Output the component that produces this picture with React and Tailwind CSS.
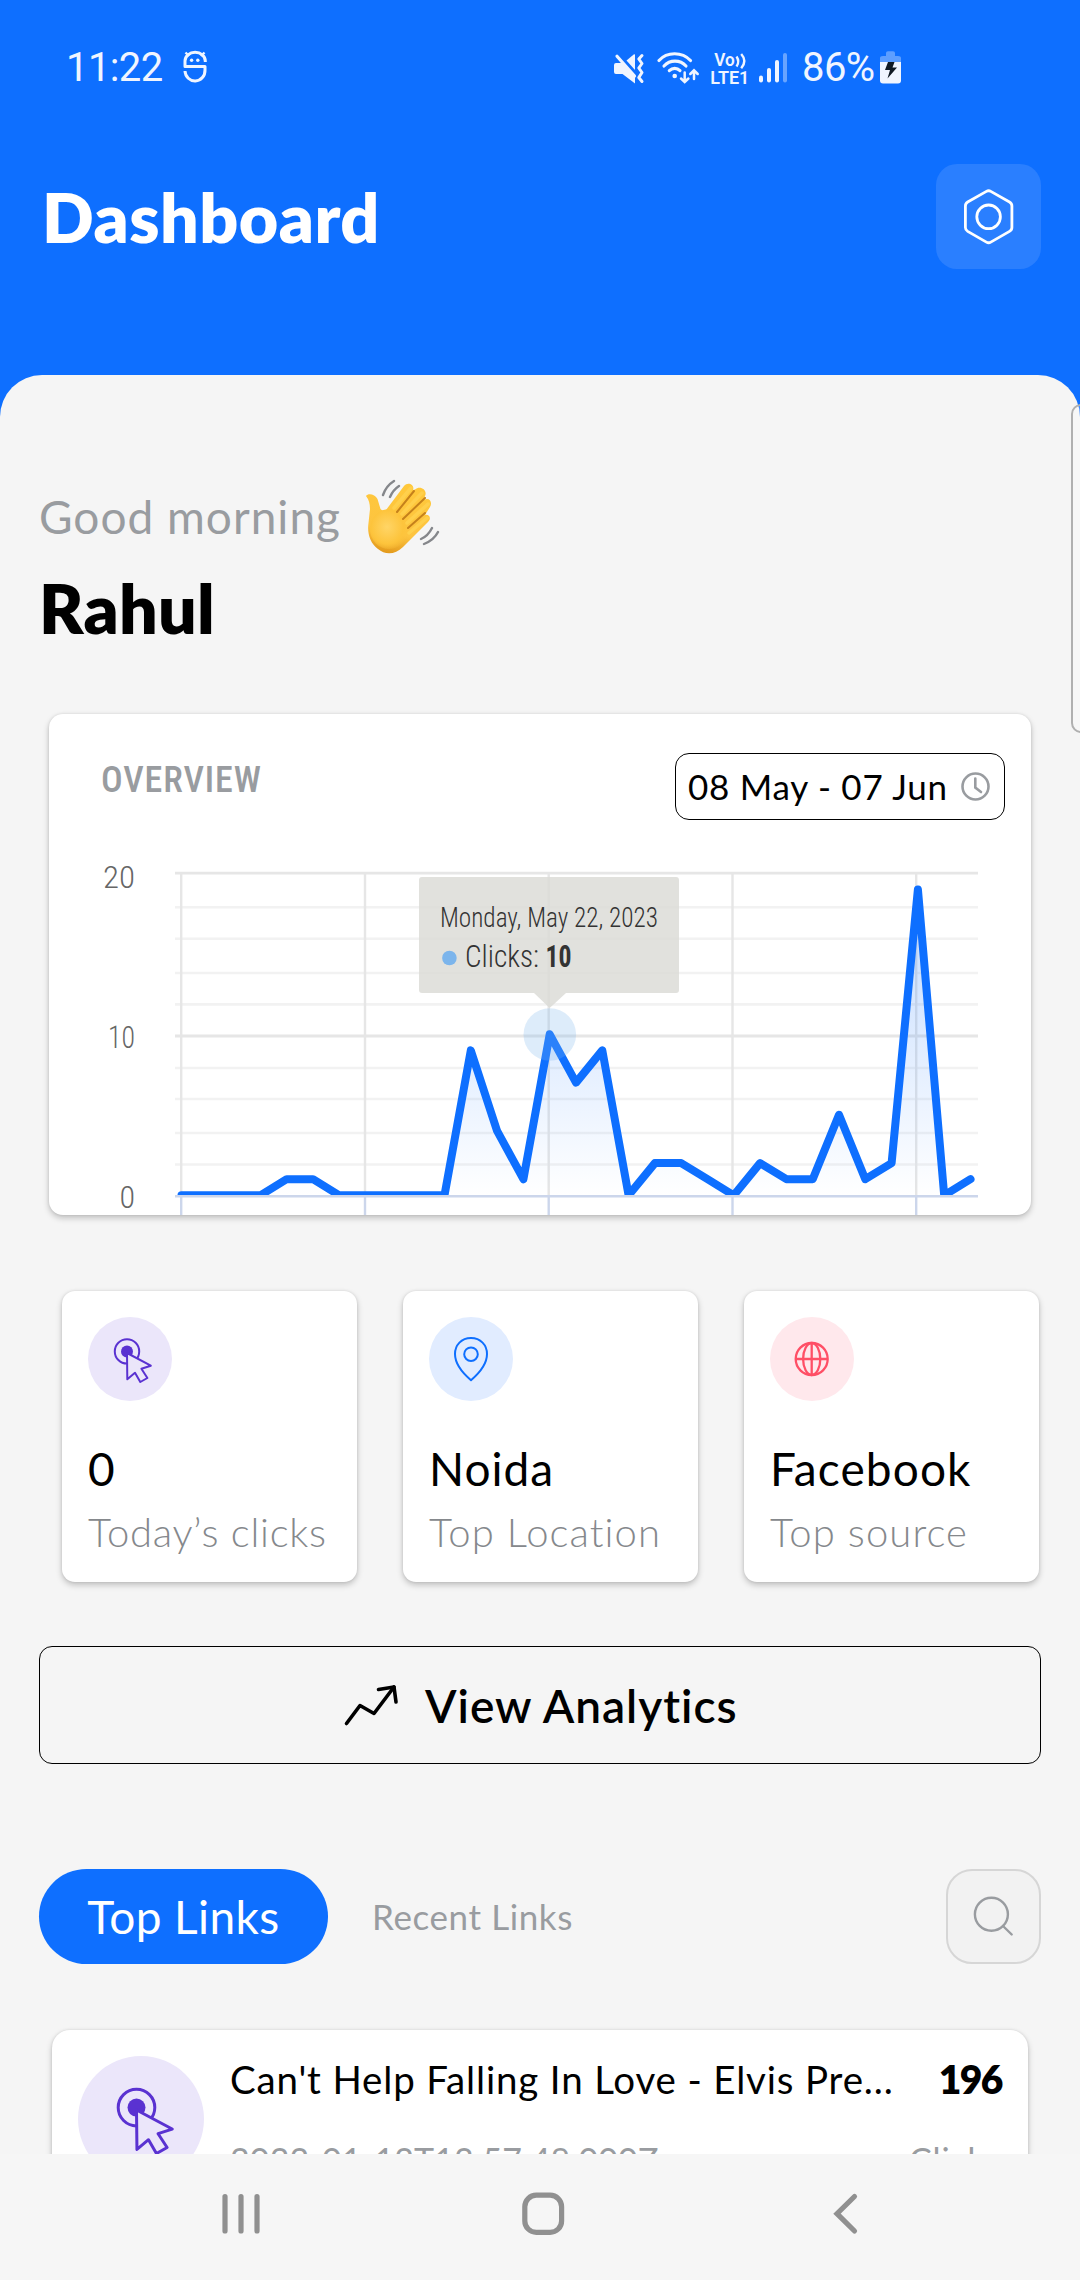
import React from "react";

const CLICKS = [0, 0, 0, 0, 1, 1, 0, 0, 0, 0, 0, 9, 4, 1, 10, 7, 9, 0, 2, 2, 1, 0, 2, 1, 1, 5, 1, 2, 19, 0, 1];
const MINOR_ROWS = [907.3, 938.7, 973, 1004.4, 1068, 1099, 1133, 1164.5];
const COLUMNS = [181.2, 365, 548.7, 732.5, 916.2];

const SHADOW = "shadow-[0_3px_6px_rgba(0,0,0,0.22),0_0_3px_rgba(0,0,0,0.1)]";

function StatusBar() {
  return (
    <div className="flex h-[134px] shrink-0 items-center pl-[66px] font-['Roboto',sans-serif] text-[40px] leading-[48px] text-[#f0f5ff]">
      <span className="w-[115px] whitespace-nowrap pt-[2px] tracking-[-0.6px]">11:22</span>
      <svg className="h-10 w-7" viewBox="0 -2 28 40" fill="none" stroke="currentColor" strokeWidth="3">
        <path d="M24.3 13V12A10 8.6 0 0 0 4 12V17.6H24V21A10 10.5 0 0 1 4 22" strokeLinejoin="round" />
        <path d="M4.5 3.5 8 7M23.5 3.5 20 7" strokeWidth="2.4" />
        <circle cx="10.6" cy="11.3" r="1.7" fill="currentColor" stroke="none" />
        <circle cx="16.8" cy="11.3" r="1.7" fill="currentColor" stroke="none" />
      </svg>
      <svg className="ml-[404px] h-10 w-[33px]" viewBox="613 47 33 40" fill="currentColor">
        <path d="M616 63H622L635 75V83.5L622.5 74H616Q614 74 614 72V65Q614 63 616 63Z" />
        <path d="M626.5 60.5 634 54.3Q635 54 635 55V70Z" />
        <path d="M617 56.3 634.5 76" stroke="currentColor" strokeWidth="3.2" strokeLinecap="round" />
        <path d="M642 55.5 638.8 59 642 63.5 638.8 68 642 72.5 638.8 77.5 642 81.5" fill="none" stroke="currentColor" strokeWidth="3" strokeLinecap="round" strokeLinejoin="round" />
      </svg>
      <svg className="ml-[11px] h-10 w-[43px]" viewBox="657 47 43 40" fill="none" stroke="currentColor" strokeWidth="3.1" strokeLinecap="round">
        <path d="M659 60.5C667 51.5 682 51.5 690.5 60.5" />
        <path d="M664 66C670 59.5 680 59.5 686 66" />
        <path d="M669.3 70.7C672.5 67.6 677 67.6 680 70.7" />
        <circle cx="674.7" cy="76" r="2.3" fill="currentColor" stroke="none" />
        <path d="M684.7 72.5V81.5M681 78.5 684.7 82 688.4 78.5M694 79V70.5M690.3 74 694 70.3 697.7 74" strokeWidth="2.5" />
      </svg>
      <svg className="ml-[10px] h-10 w-10" viewBox="710 47 40 40" fill="currentColor">
        <g fontFamily="Roboto, sans-serif" fontWeight="600">
          <text x="714.3" y="66" fontSize="17.5" textLength="20.5" lengthAdjust="spacingAndGlyphs">Vo</text>
          <text x="710.3" y="84" fontSize="18" textLength="39" lengthAdjust="spacingAndGlyphs">LTE1</text>
        </g>
        <path d="M736.5 56.5Q740 61.5 736.5 66.5M741.2 54Q747.5 61 741.2 68.3" fill="none" stroke="currentColor" strokeWidth="2.4" />
      </svg>
      <svg className="ml-[7px] h-10 w-8" viewBox="757 47 32 40" fill="currentColor">
        <rect x="759" y="75.5" width="4" height="7" rx="2" />
        <rect x="767" y="68" width="4" height="14.5" rx="2" />
        <rect x="775" y="60" width="4" height="22.5" rx="2" />
        <rect x="783" y="53" width="4" height="29.5" rx="2" opacity="0.4" />
      </svg>
      <span className="ml-[13px] w-[75px] whitespace-nowrap pt-[2px] tracking-[-0.6px]">86%</span>
      <svg className="ml-0.5 h-10 w-[23px]" viewBox="879 47 23 40" fill="currentColor">
        <path d="M880 62V58Q880 56 883 56H886V53Q886 51.3 888 51.3H893Q895 51.3 895 53V56H898Q901 56 901 58V62Z" opacity="0.35" />
        <path d="M880 62H901V80.5Q901 83.5 898 83.5H883Q880 83.5 880 80.5Z" />
        <path d="M888 62 885 70H890L887.5 78.5 897 67.5H892.5L894.5 62Z" fill="#101a24" />
      </svg>
    </div>
  );
}

function Header() {
  return (
    <header className="flex h-[241px] shrink-0 items-start justify-between pl-[42px] pr-[39px] pt-[30px]">
      <h1 className="pt-px text-[68px] font-extrabold leading-[103px] tracking-[0.5px] text-white">Dashboard</h1>
      <button className="flex size-[105px] items-center justify-center rounded-[21px] bg-[#2a7fff]">
        <svg className="h-14 w-[50px]" viewBox="0 0 50 56" fill="none" stroke="white" strokeWidth="2.8">
          <path d="M22.4 2.4Q24.6 1.1 26.8 2.4L45.5 13Q47.9 14.4 47.9 17V38.5Q47.9 41 45.5 42.4L26.8 53.1Q24.6 54.4 22.4 53.1L3.7 42.4Q1.4 41 1.4 38.5V17Q1.4 14.4 3.7 13Z" />
          <circle cx="24.6" cy="27.8" r="11.8" />
        </svg>
      </button>
    </header>
  );
}

function WavingHand() {
  return (
    <svg className="h-[76px] w-[76px]" viewBox="0 0 76 76" fill="none" strokeLinecap="round">
      <defs>
        <linearGradient id="skin" x1="0.6" y1="0" x2="0.35" y2="1">
          <stop offset="0" stopColor="#ffc83a" />
          <stop offset="0.7" stopColor="#fdc440" />
          <stop offset="1" stopColor="#e39a1c" />
        </linearGradient>
        <radialGradient id="palm" cx="0.45" cy="0.45" r="0.6">
          <stop offset="0" stopColor="#ffd566" />
          <stop offset="0.7" stopColor="#fdc43c" />
          <stop offset="1" stopColor="#fdc43c" stopOpacity="0" />
        </radialGradient>
      </defs>
      <path d="M1 17C3 14 10 15 12.5 20L15.500 30Q18 33 21 31L39 7C43 2 50 6 48 11L50 10.500C55 6 63 11 60 17L59 21C64 18 68 23 65 28L60 36C64 35 67 39 63 43L38 68C30 76 20 76 13 70C5 64 2 54 3.500 44L5 30Q5 22 1 17Z" fill="url(#skin)" />
      <ellipse cx="24" cy="50" rx="19" ry="20" fill="url(#palm)" />
      <path d="M49 12 32 33M60 19 38 40M60 34 43 49" stroke="#c5811b" strokeWidth="2" />
      <path d="M46 9 29 29M57 14 37 35M63 25 42 44M62 39 44 54" stroke="#ffd04c" strokeWidth="3.500" />
      <g stroke="#85878b" strokeWidth="2.400">
        <path d="M18 16Q21 7 29 2M25 18Q28 11 34 7M56 60Q63 57 67 49M59 65Q69 61 73 53" />
      </g>
    </svg>
  );
}

function Chart() {
  const unit = 16.1;
  const points = CLICKS.map((v, i) => [181.5 + i * 26.3, 1195.3 - v * unit]);
  const line = points.map((p) => p.join(",")).join(" ");
  return (
    <svg className="mt-[15px] block h-[380px] w-[982px]" viewBox="49 835 982 380" fontFamily="'Roboto Condensed', 'Liberation Sans Narrow', sans-serif">
      <defs>
        <linearGradient id="area" gradientUnits="userSpaceOnUse" x1="0" y1="889" x2="0" y2="1196">
          <stop offset="0" stopColor="#0e6fff" stopOpacity="0.26" />
          <stop offset="1" stopColor="#0e6fff" stopOpacity="0" />
        </linearGradient>
        <clipPath id="plot">
          <rect x="175" y="860" width="806" height="335" />
        </clipPath>
      </defs>
      {MINOR_ROWS.map((y) => (
        <path key={y} d={`M175 ${y}H978`} stroke="#f2f2f2" strokeWidth="2.6" />
      ))}
      <path d="M175 873.2H978M175 1036H978" stroke="#e6e6e6" strokeWidth="2.8" />
      {COLUMNS.map((x) => (
        <g key={x} strokeWidth="2.4">
          <path d={`M${x} 873V1196`} stroke="#e6e6e6" />
          <path d={`M${x} 1196V1215`} stroke="#ccd6eb" />
        </g>
      ))}
      <g clipPath="url(#plot)">
        <polygon points={`181.5,1196.3 ${line} 970.5,1196.3`} fill="url(#area)" />
        <polyline points={line} fill="none" stroke="#0e6fff" strokeWidth="8" strokeLinejoin="round" strokeLinecap="round" />
      </g>
      <path d="M175 1196.3H978" stroke="#ccd6eb" strokeWidth="2.6" />
      <circle cx="549.8" cy="1034.5" r="26.3" fill="#7cb5ec" opacity="0.26" />
      <path d="M422 877H676Q679 877 679 880V990Q679 993 676 993H566L549.7 1008 534 993H422Q419 993 419 990V880Q419 877 422 877Z" fill="#dbdbd6" fillOpacity="0.82" />
      <g fill="#333333">
        <text x="440" y="927" fontSize="27.5" fontWeight="300" textLength="218" lengthAdjust="spacingAndGlyphs">Monday, May 22, 2023</text>
        <text x="465" y="966.5" fontSize="31" fontWeight="300" textLength="74" lengthAdjust="spacingAndGlyphs">Clicks:</text>
        <text x="545.5" y="966.5" fontSize="31" fontWeight="700" textLength="26" lengthAdjust="spacingAndGlyphs">10</text>
      </g>
      <circle cx="449.4" cy="958" r="7.3" fill="#7cb5ec" />
      <g fill="#666666" fontSize="32" fontWeight="300" textAnchor="end">
        <text x="135" y="888" textLength="32" lengthAdjust="spacingAndGlyphs">20</text>
        <text x="135" y="1048" textLength="27" lengthAdjust="spacingAndGlyphs">10</text>
        <text x="135" y="1207.5">0</text>
      </g>
    </svg>
  );
}

function Overview() {
  return (
    <section className={`ml-[49px] mt-[67px] h-[501px] w-[982px] shrink-0 overflow-hidden rounded-[14px] bg-white pt-[39px] ${SHADOW}`}>
      <div className="flex items-start justify-between pl-[52px] pr-[26px]">
        <h2 className="font-['Roboto_Condensed','Liberation_Sans_Narrow',sans-serif] text-[36px] font-medium leading-[55px] tracking-[0.9px] text-[#999ca0]">OVERVIEW</h2>
        <div className="flex h-[67px] w-[330px] items-center justify-between rounded-[14px] border border-black pl-3 pr-[14px]">
          <span className="whitespace-nowrap text-[35px] leading-[65px] tracking-[0.75px] text-black">08 May - 07 Jun</span>
          <svg className="size-[29px]" viewBox="0 0 29 29" fill="none" stroke="#999ca0" strokeWidth="2.6" strokeLinecap="round">
            <circle cx="14.5" cy="14.5" r="13" />
            <path d="M14.3 6.5V15.5L20 20" />
          </svg>
        </div>
      </div>
      <Chart />
    </section>
  );
}

function ClickIcon({ className }) {
  return (
    <svg className={className} viewBox="0 0 84 84" fill="none" stroke="#5a32d1" strokeWidth="2" strokeLinejoin="round">
      <circle cx="39" cy="34.4" r="12.2" />
      <circle cx="39" cy="34.4" r="6" fill="#5a32d1" stroke="none" />
      <path d="M39 36 62.8 48.7 53.4 51.8 59.4 61 52.3 65 47 55.8 39.3 62.3Z" fill="#ebe6fa" />
    </svg>
  );
}

function PinIcon({ className }) {
  return (
    <svg className={className} viewBox="0 0 84 84" fill="none" stroke="#0e6fff" strokeWidth="2" strokeLinejoin="round">
      <path d="M42 21C32.5 21 26 28 26 37C26 47 33 55.5 42 63.2C51 55.5 58 47 58 37C58 28 51.5 21 42 21Z" />
      <circle cx="42" cy="37.2" r="6.8" />
    </svg>
  );
}

function GlobeIcon({ className }) {
  return (
    <svg className={className} viewBox="0 0 84 84" fill="none" stroke="#ff4f66" strokeWidth="2.3">
      <circle cx="41.7" cy="42" r="16" />
      <ellipse cx="41.7" cy="42" rx="8.6" ry="16" />
      <path d="M41.7 26V58M25.7 42H57.7" />
    </svg>
  );
}

function StatCard({ Icon, tint, value, label, valueClass, labelClass }) {
  return (
    <div className={`h-[291px] w-[295px] rounded-[13px] bg-white pl-[26px] pt-[26px] ${SHADOW}`}>
      <div className={`size-[84px] rounded-full ${tint}`}>
        <Icon className="size-full" />
      </div>
      <div className={`mt-[38px] whitespace-nowrap text-[46px] leading-[60px] text-black ${valueClass}`}>{value}</div>
      <div className={`mt-[8px] whitespace-nowrap text-[40px] font-light leading-[50px] text-[#85888c] ${labelClass}`}>{label}</div>
    </div>
  );
}

function Tabs() {
  return (
    <div className="mt-[105px] flex shrink-0 items-center pl-[39px] pr-[39px]">
      <button className="h-[95px] w-[289px] rounded-full bg-[#0e6fff] text-[46px] leading-[93px] tracking-[0.4px] text-white">Top Links</button>
      <span className="ml-[44px] pb-px text-[35px] leading-[94px] tracking-[0.6px] text-[#999ca0]">Recent Links</span>
      <button className="ml-auto size-[95px] rounded-[26px] border-[2.5px] border-[#d6d6d6] bg-[#f2f2f2]">
        <svg className="size-full" viewBox="0 0 91 91" fill="none" stroke="#999ca0" strokeWidth="2.4" strokeLinecap="round">
          <circle cx="43.4" cy="43.3" r="16.5" />
          <path d="M55 55 63.7 63.5" />
        </svg>
      </button>
    </div>
  );
}

function LinkCard() {
  return (
    <div className={`ml-[52px] mt-[66px] flex h-[240px] w-[976px] shrink-0 items-start rounded-[18px] bg-white pl-[26px] pr-[26px] pt-[26px] ${SHADOW}`}>
      <div className="size-[126px] shrink-0 rounded-full bg-[#ebe6fa]">
        <ClickIcon className="size-full" />
      </div>
      <div className="ml-[26px] flex-1">
        <div className="flex justify-between leading-[46px] text-black">
          <span className="whitespace-nowrap text-[38.5px] tracking-[0.83px]">Can't Help Falling In Love - Elvis Pre...</span>
          <span className="text-[39px] font-extrabold tracking-[-1.5px]">196</span>
        </div>
        <div className="mt-[35px] flex justify-between text-[34px] leading-[46px] text-[#999ca0]">
          <span className="tracking-[0.1px]">2022-01-12T13:57:48.000Z</span>
          <span className="pr-px tracking-[0.8px]">Clicks</span>
        </div>
      </div>
    </div>
  );
}

function NavBar() {
  return (
    <nav className="flex h-[126px] shrink-0 items-center gap-[258px] bg-[#f6f6f6] pb-[6px] pl-[219px] pt-0">
      <svg className="h-11 w-11" viewBox="0 0 44 44" stroke="#909090" strokeWidth="5.2" strokeLinecap="round">
        <path d="M6 4.5V39M22 4.5V39M38 4.5V39" />
      </svg>
      <svg className="h-11 w-11" viewBox="0 0 44 44" fill="none" stroke="#909090" strokeWidth="5.2">
        <rect x="3.8" y="3.2" width="36.8" height="37.2" rx="11.5" />
      </svg>
      <svg className="h-11 w-11" viewBox="0 0 44 44" fill="none" stroke="#909090" strokeWidth="5.2" strokeLinecap="round" strokeLinejoin="miter">
        <path d="M31.5 4.5 14 21.7 31.5 39" />
      </svg>
    </nav>
  );
}

export default function App() {
  return (
    <div className="relative flex h-[2280px] w-[1080px] flex-col overflow-hidden bg-[#0e6fff] font-['Lato',sans-serif] [font-variant-ligatures:none]">
      <StatusBar />
      <Header />
      <main className="flex h-[1779px] shrink-0 flex-col overflow-hidden rounded-t-[42px] bg-[#f5f5f5] pt-[104px]">
        <div className="flex h-[75px] shrink-0 items-center pl-[39px]">
          <span className="w-[326px] whitespace-nowrap text-[46px] leading-[73px] tracking-[1px] text-[#999ca0]">Good morning</span>
          <WavingHand />
        </div>
        <div className="mt-[13px] h-20 pl-[39px] text-[68px] font-extrabold leading-[82px] tracking-[0.3px] text-black">Rahul</div>
        <Overview />
        <div className="ml-[62px] mt-[76px] flex shrink-0 gap-[46px]">
          <StatCard Icon={ClickIcon} tint="bg-[#ebe6fa]" value="0" label="Today’s clicks" valueClass="tracking-[1px]" labelClass="tracking-[0.75px]" />
          <StatCard Icon={PinIcon} tint="bg-[#e1ecff]" value="Noida" label="Top Location" valueClass="tracking-[1px]" labelClass="tracking-[1.1px]" />
          <StatCard Icon={GlobeIcon} tint="bg-[#ffe8ec]" value="Facebook" label="Top source" valueClass="tracking-[1.1px]" labelClass="tracking-[1.1px]" />
        </div>
        <button className="ml-[39px] mt-[64px] flex h-[118px] w-[1002px] shrink-0 items-center rounded-[13px] border border-black pl-[302px] text-black">
          <svg className="h-12 w-16" viewBox="342 1681 64 48" fill="none" stroke="black" strokeWidth="3.6" strokeLinecap="round" strokeLinejoin="round">
            <path d="M346.5 1723.5 360 1705.500 374 1713.500 394 1687" />
            <path d="M378.5 1689.5 394 1687 396 1702" />
          </svg>
          <span className="ml-[19px] whitespace-nowrap pt-[2px] text-[46px] font-semibold leading-[114px] tracking-[1px]">View Analytics</span>
        </button>
        <Tabs />
        <LinkCard />
      </main>
      <NavBar />
      <div className="absolute -right-3 top-[404px] h-[329px] w-[21px] rounded-[10px] border-[2.5px] border-[#b0b0b0] bg-white/20" />
    </div>
  );
}
